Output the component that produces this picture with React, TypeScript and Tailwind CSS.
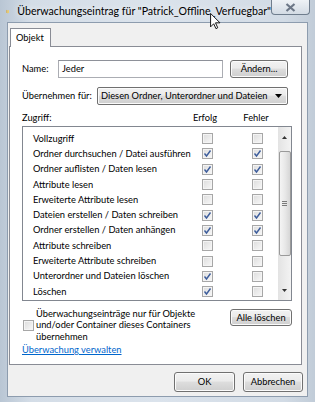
import React from 'react';

interface Right {
  label: string;
  ok: boolean;
  err: boolean;
}

const rights: Right[] = [
  { label: 'Vollzugriff', ok: false, err: false },
  { label: 'Ordner durchsuchen / Datei ausführen', ok: true, err: true },
  { label: 'Ordner auflisten / Daten lesen', ok: true, err: true },
  { label: 'Attribute lesen', ok: false, err: false },
  { label: 'Erweiterte Attribute lesen', ok: false, err: false },
  { label: 'Dateien erstellen / Daten schreiben', ok: true, err: true },
  { label: 'Ordner erstellen / Daten anhängen', ok: true, err: true },
  { label: 'Attribute schreiben', ok: false, err: false },
  { label: 'Erweiterte Attribute schreiben', ok: false, err: false },
  { label: 'Unterordner und Dateien löschen', ok: true, err: false },
  { label: 'Löschen', ok: true, err: false },
  { label: 'Berechtigungen lesen', ok: false, err: false },
];

const Btn: React.FC<{ children: React.ReactNode; className?: string }> = ({ children, className }) => (
  <div
    className={`flex items-center justify-center whitespace-nowrap border border-[#707070] rounded-[3px] bg-[linear-gradient(#f2f2f2,#ebebeb_45%,#dddddd_50%,#cfcfcf)] shadow-[inset_0_0_0_1px_#fbfbfb] text-black ${className ?? ''}`}
  >
    {children}
  </div>
);

const Check: React.FC<{ checked: boolean }> = ({ checked }) => (
  <div className="w-[11px] h-[11px] shrink-0 flex items-center justify-center border border-[#a7a7a7] bg-[linear-gradient(135deg,#dcdcdc,#f8f8f8)] shadow-[inset_0_0_0_1px_#f4f4f4]">
    {checked && (
      <svg width="9" height="9" viewBox="0 0 9 9">
        <path d="M1.5 4.5 L3.5 7 L7.5 1.5" fill="none" stroke="#3d5d9c" strokeWidth="1.4" />
      </svg>
    )}
  </div>
);

export default function App() {
  return (
    <div className="relative w-[315px] h-[402px] overflow-hidden flex flex-col bg-[linear-gradient(90deg,#b9c6d4,#d4dde7_10%,#dbe3ec_50%,#d2dbe5_90%,#c1ccd8)] font-['Lato',sans-serif] text-[9.3px] text-black">
      {/* title bar */}
      <div className="h-[22px] shrink-0 flex items-start">
        <svg className="mt-[6px] ml-[6px]" width="9" height="11" viewBox="0 0 9 11">
          <path d="M1 1 L4 2.5 L4 10.5 L1 9 Z" fill="#d9a93a" />
          <path d="M4 2.5 L8 1.5 L8 9.5 L4 10.5 Z" fill="#f2cf63" />
        </svg>
        <span className="ml-[8px] mt-[4px] whitespace-nowrap text-[10.6px] leading-[14px] [text-shadow:0_0_6px_#fff]">
          Überwachungseintrag für "Patrick_Offline_Verfuegbar"
        </span>
        <div className="ml-auto mr-[5px] w-[39px] h-[15px] shrink-0 border border-t-0 border-[#6f7d8d] rounded-b-[4px] bg-[linear-gradient(#eef2f6,#d3dbe4)] flex items-center justify-center">
          <svg width="11" height="9" viewBox="0 0 11 9">
            <path d="M1.5 1 L9.5 8 M9.5 1 L1.5 8" stroke="#6c7787" strokeWidth="2.2" />
          </svg>
        </div>
      </div>

      {/* client area */}
      <div className="mx-[7px] h-[375px] border border-[#8d9cae] bg-[#f0f0f0] flex flex-col">
        {/* tab strip */}
        <div className="pt-[5px] pl-[2px] flex">
          <div className="w-[41px] h-[19px] border border-b-0 border-[#898c95] bg-white flex items-center pl-[5px] relative z-10 -mb-px">
            Objekt
          </div>
        </div>

        {/* tab panel */}
        <div className="ml-px mr-[5px] h-[319px] border border-[#898c95] bg-white flex flex-col whitespace-nowrap">
          {/* name */}
          <div className="mt-[13px] h-[18px] flex items-center pl-[12px]">
            <span className="w-[36px]">Name:</span>
            <div className="w-[165px] h-[18px] border border-[#abadb3] border-t-[#8e9199] bg-white flex items-center pl-[3px]">
              Jeder
            </div>
            <Btn className="ml-[7px] w-[58px] h-[18px]">Ändern...</Btn>
          </div>

          {/* apply to */}
          <div className="mt-[9px] h-[18px] flex items-center pl-[12px]">
            <span className="w-[75px]">Übernehmen für:</span>
            <div className="w-[191px] h-[18px] border border-[#707070] rounded-[2px] bg-[linear-gradient(#f2f2f2,#ebebeb_45%,#dddddd_50%,#cfcfcf)] shadow-[inset_0_0_0_1px_#fbfbfb] flex items-center pl-[3px] pr-[5px]">
              <span className="flex-1">Diesen Ordner, Unterordner und Dateien</span>
              <svg width="7" height="4" viewBox="0 0 7 4">
                <path d="M0 0 H7 L3.5 4 Z" fill="#000" />
              </svg>
            </div>
          </div>

          {/* header */}
          <div className="mt-[6px] h-[14px] flex items-center pl-[12px]">
            <span className="w-[158px]">Zugriff:</span>
            <span className="w-[50px] text-center">Erfolg</span>
            <span className="w-[52px] text-center">Fehler</span>
          </div>

          {/* list */}
          <div className="mt-px ml-[12px] w-[270px] h-[175px] border border-[#828790] bg-white flex overflow-hidden">
            <div className="flex-1 pt-[4px] overflow-hidden">
              {rights.map((r) => (
                <div key={r.label} className="h-[15.3px] flex items-center">
                  <span className="w-[179px] pl-[10px] overflow-hidden">{r.label}</span>
                  <Check checked={r.ok} />
                  <div className="ml-[39px]">
                    <Check checked={r.err} />
                  </div>
                </div>
              ))}
            </div>
            {/* scrollbar */}
            <div className="w-[13px] bg-[linear-gradient(90deg,#e3e3e3,#f3f3f3)] flex flex-col items-center">
              <div className="h-[20px] flex items-center justify-center">
                <svg width="5" height="3" viewBox="0 0 5 3">
                  <path d="M0 3 H5 L2.5 0 Z" fill="#333" />
                </svg>
              </div>
              <div className="mt-[4px] w-[12px] h-[105px] border border-[#9a9a9a] rounded-[2px] bg-[linear-gradient(90deg,#f4f4f4,#e8e8e8_50%,#d6d6d6)] flex items-center justify-center">
                <div className="flex flex-col gap-px">
                  <div className="w-[5px] h-px bg-[#7a7a7a]" />
                  <div className="w-[5px] h-px bg-[#7a7a7a]" />
                  <div className="w-[5px] h-px bg-[#7a7a7a]" />
                </div>
              </div>
              <div className="mt-auto h-[20px] flex items-center justify-center">
                <svg width="5" height="3" viewBox="0 0 5 3">
                  <path d="M0 0 H5 L2.5 3 Z" fill="#333" />
                </svg>
              </div>
            </div>
          </div>

          {/* inherit checkbox + delete all */}
          <div className="mt-[6px] flex items-start pl-[13px]">
            <div className="flex items-center h-[36px]">
              <Check checked={false} />
              <span className="ml-[2px] w-[170px] leading-[11.5px] whitespace-normal">
                Überwachungseinträge nur für Objekte und/oder Container dieses Containers übernehmen
              </span>
            </div>
            <Btn className="ml-auto mr-[9px] mt-[2px] w-[62px] h-[17px]">Alle löschen</Btn>
          </div>

          <span className="mt-[1px] ml-[12px] leading-[12px] text-[#0066cc] underline self-start">
            Überwachung verwalten
          </span>
        </div>

        {/* dialog buttons */}
        <div className="mt-[7px] flex justify-end pr-[4px] gap-[8px]">
          <Btn className="w-[61px] h-[20px]">OK</Btn>
          <Btn className="w-[60px] h-[20px]">Abbrechen</Btn>
        </div>
      </div>

      {/* mouse pointer over the title */}
      <svg className="absolute left-[210px] top-[13px]" width="11" height="17" viewBox="0 0 12 19">
        <path d="M0.5 0.5 L0.5 15.5 L4 12 L6.5 17.5 L8.5 16.5 L6 11 L11 11 Z" fill="#fff" stroke="#000" strokeWidth="1" />
      </svg>
    </div>
  );
}
